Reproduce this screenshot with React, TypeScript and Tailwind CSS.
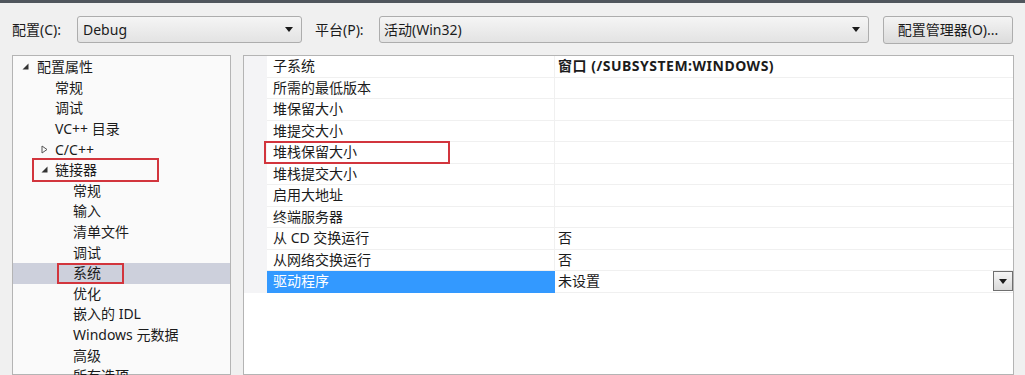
import React from 'react';

const font = { fontFamily: '"Noto Sans", "Noto Sans CJK SC", sans-serif' };

const Arrow = () => (
  <svg width="8" height="5" viewBox="0 0 8 5" className="shrink-0">
    <polygon points="0,0 8,0 4,5" fill="#1a1a1a" />
  </svg>
);

const Expanded = () => (
  <svg width="7" height="7" viewBox="0 0 7 7">
    <polygon points="6.5,0.5 6.5,6.5 0.5,6.5" fill="#333" />
  </svg>
);

const Collapsed = () => (
  <svg width="7" height="9" viewBox="0 0 7 9">
    <polygon points="1,1 6,4.5 1,8" fill="none" stroke="#555" strokeWidth="1" />
  </svg>
);

type TreeItem = { label: string; level: number; toggle?: 'open' | 'closed'; selected?: boolean; mark?: 'link' | 'sys' };

const tree: TreeItem[] = [
  { label: '配置属性', level: 0, toggle: 'open' },
  { label: '常规', level: 1 },
  { label: '调试', level: 1 },
  { label: 'VC++ 目录', level: 1 },
  { label: 'C/C++', level: 1, toggle: 'closed' },
  { label: '链接器', level: 1, toggle: 'open', mark: 'link' },
  { label: '常规', level: 2 },
  { label: '输入', level: 2 },
  { label: '清单文件', level: 2 },
  { label: '调试', level: 2 },
  { label: '系统', level: 2, selected: true, mark: 'sys' },
  { label: '优化', level: 2 },
  { label: '嵌入的 IDL', level: 2 },
  { label: 'Windows 元数据', level: 2 },
  { label: '高级', level: 2 },
  { label: '所有选项', level: 2 },
];

const props: { name: string; value?: string; bold?: boolean; active?: boolean; mark?: boolean }[] = [
  { name: '子系统', value: '窗口 (/SUBSYSTEM:WINDOWS)', bold: true },
  { name: '所需的最低版本' },
  { name: '堆保留大小' },
  { name: '堆提交大小' },
  { name: '堆栈保留大小', mark: true },
  { name: '堆栈提交大小' },
  { name: '启用大地址' },
  { name: '终端服务器' },
  { name: '从 CD 交换运行', value: '否' },
  { name: '从网络交换运行', value: '否' },
  { name: '驱动程序', value: '未设置', active: true },
];

const textPad: Record<number, string> = { 0: 'pl-[24px]', 1: 'pl-[42px]', 2: 'pl-[60px]' };

export default function App() {
  return (
    <div className="w-[1025px] h-[375px] overflow-hidden bg-[#f0f0f0] text-[14px] text-[#1b1b1b] flex flex-col" style={font}>
      <div className="h-[3px] bg-[#50565d] shrink-0" />

      {/* toolbar */}
      <div className="flex items-center h-[27px] mt-[13px] pl-[12px] shrink-0">
        <span className="w-[65px] leading-none">配置(C):</span>
        <div className="w-[225px] h-[27px] flex items-center justify-between px-[5px] pr-[8px] border border-[#adadad] rounded-[3px] bg-gradient-to-b from-[#f5f5f5] to-[#e3e3e3]">
          <span className="leading-none">Debug</span>
          <Arrow />
        </div>
        <span className="ml-[13px] w-[64px] leading-none">平台(P):</span>
        <div className="w-[490px] h-[27px] flex items-center justify-between px-[4px] pr-[8px] border border-[#adadad] rounded-[3px] bg-gradient-to-b from-[#f5f5f5] to-[#e3e3e3]">
          <span className="leading-none">活动(Win32)</span>
          <Arrow />
        </div>
        <div className="ml-[14px] w-[130px] h-[28px] flex items-center justify-center border border-[#adadad] rounded-[3px] bg-gradient-to-b from-[#f4f4f4] to-[#dcdcdc]">
          <span className="leading-none">配置管理器(O)...</span>
        </div>
      </div>

      <div className="flex flex-1 mt-[12px] pl-[12px] min-h-0">
        {/* tree */}
        <div className="w-[219px] border border-[#b4b4b4] bg-[#fafafa] pt-[1px]">
          {tree.map((t, i) => (
            <div
              key={i}
              className={`relative h-[20.6px] flex items-center ${t.selected ? 'bg-[#cdd0dc]' : ''}`}
            >
              {t.toggle && (
                <span className={`absolute top-[6px] ${t.level === 0 ? 'left-[9px]' : 'left-[28px]'}`}>
                  {t.toggle === 'open' ? <Expanded /> : <Collapsed />}
                </span>
              )}
              <span className={`${textPad[t.level]} leading-none whitespace-nowrap`}>{t.label}</span>
              {t.mark === 'link' && (
                <div className="absolute left-[19px] top-[-2px] w-[127px] h-[24px] border-2 border-[#d2353d]" />
              )}
              {t.mark === 'sys' && (
                <div className="absolute left-[44px] top-0 w-[67px] h-[21px] border-2 border-[#d2353d]" />
              )}
            </div>
          ))}
        </div>

        {/* property grid */}
        <div className="ml-[12px] w-[771px] border border-[#b4b4b4] bg-white">
          {props.map((p, i) => (
            <div key={i} className="relative flex h-[21.5px]">
              <div className="w-[23px] bg-[#f4f4f6] shrink-0" />
              <div
                className={`w-[288px] shrink-0 flex items-center pl-[6px] border-b border-r ${
                  p.active ? 'bg-[#3399ff] text-white border-[#3399ff]' : 'border-[#f0f0f0]'
                }`}
              >
                <span className="leading-none whitespace-nowrap">{p.name}</span>
              </div>
              <div className="flex-1 flex items-center justify-between pl-[3px] border-b border-[#f0f0f0]">
                <span className={`leading-none whitespace-nowrap ${p.bold ? 'font-bold tracking-[0.5px]' : ''}`}>{p.value ?? ''}</span>
                {p.active && (
                  <div className="w-[20px] h-[20px] flex items-center justify-center border border-[#6f6f6f] bg-gradient-to-b from-[#f6f6f6] to-[#d9d9d9]">
                    <Arrow />
                  </div>
                )}
              </div>
              {p.mark && (
                <div className="absolute left-[20px] top-[-1px] w-[186px] h-[23px] border-2 border-[#d2353d]" />
              )}
            </div>
          ))}
        </div>
      </div>
    </div>
  );
}
